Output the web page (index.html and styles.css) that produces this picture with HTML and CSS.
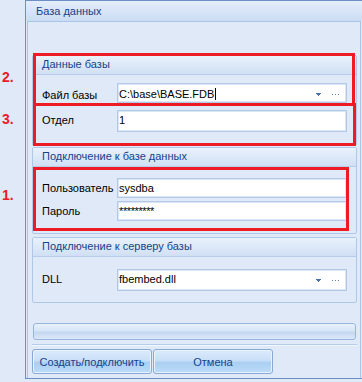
FILE: index.html
```html
<!DOCTYPE html>
<html>
<head>
<meta charset="utf-8">
<link rel="stylesheet" href="styles.css">
</head>
<body>
<div class="app">
  <div class="gutter"></div>
  <div class="window">
    <div class="title">База данных</div>
    <div class="panel">
      <section class="group g1">
        <div class="ghead">Данные базы</div>
        <div class="gbody b1">
          <div class="row">
            <span class="lbl low">Файл базы</span>
            <div class="inp"><span class="val low">C:\base\BASE.FDB<i class="caret"></i></span><svg class="arrow" width="5" height="3" viewBox="0 0 5 3"><rect x="0" y="0" width="5" height="1" fill="#4670ad"/><rect x="1" y="1" width="3" height="1" fill="#4670ad"/><rect x="2" y="2" width="1" height="1" fill="#4670ad"/></svg><svg class="dots" width="7" height="1" viewBox="0 0 7 1"><rect x="0" y="0" width="1" height="1" fill="#5a7fb8"/><rect x="3" y="0" width="1" height="1" fill="#5a7fb8"/><rect x="6" y="0" width="1" height="1" fill="#5a7fb8"/></svg></div>
          </div>
          <div class="row r2">
            <span class="lbl">Отдел</span>
            <div class="inp tall"><span class="val">1</span></div>
          </div>
        </div>
      </section>
      <section class="group g2">
        <div class="ghead">Подключение к базе данных</div>
        <div class="gbody b2">
          <div class="row">
            <span class="lbl">Пользователь</span>
            <div class="inp"><span class="val">sysdba</span></div>
          </div>
          <div class="row r3">
            <span class="lbl">Пароль</span>
            <div class="inp"><span class="val pw">*********</span></div>
          </div>
        </div>
      </section>
      <section class="group g3">
        <div class="ghead">Подключение к серверу базы</div>
        <div class="gbody b3">
          <div class="row">
            <span class="lbl">DLL</span>
            <div class="inp tall"><span class="val">fbembed.dll</span><svg class="arrow" width="5" height="3" viewBox="0 0 5 3"><rect x="0" y="0" width="5" height="1" fill="#4670ad"/><rect x="1" y="1" width="3" height="1" fill="#4670ad"/><rect x="2" y="2" width="1" height="1" fill="#4670ad"/></svg><svg class="dots" width="7" height="1" viewBox="0 0 7 1"><rect x="0" y="0" width="1" height="1" fill="#5a7fb8"/><rect x="3" y="0" width="1" height="1" fill="#5a7fb8"/><rect x="6" y="0" width="1" height="1" fill="#5a7fb8"/></svg></div>
          </div>
        </div>
      </section>
      <div class="progress"></div>
      <div class="sep"></div>
      <div class="buttons">
        <button class="btn">Создать/подключить</button>
        <button class="btn">Отмена</button>
      </div>
    </div>
  </div>
  <span class="num n2">2.</span>
  <span class="num n3">3.</span>
  <span class="num n1">1.</span>
  <div class="mark m2"></div>
  <div class="mark m3"></div>
  <div class="mark m1"></div>
</div>
</body>
</html>
```
FILE: styles.css
```css
* { box-sizing: border-box; }
html, body { margin: 0; padding: 0; }
body {
  background: #dfe9f7;
  font-family: "Liberation Sans", Arial, sans-serif;
  font-size: 11px;
  color: #000;
  width: 362px;
  height: 382px;
  overflow: hidden;
}
.app { position: relative; display: flex; width: 362px; height: 382px; }
.gutter { width: 25px; flex: none; }
.window {
  width: 337px;
  height: 379px;
  border: 1px solid #6e8fc3;
  border-right: none;
  display: flex;
  flex-direction: column;
}
.title {
  height: 20px;
  flex: none;
  background: linear-gradient(#e4eefb, #d6e4f7 55%, #cbdcf3);
  color: #15428b;
  font-size: 11px;
  line-height: 20px;
  padding-left: 10px;
}
.panel {
  width: 334px;
  margin-left: 1px;
  flex: 1;
  border: 1px solid #a9c4e8;
  border-bottom: none;
  padding: 33px 3px 0 4px;
  display: flex;
  flex-direction: column;
}
.group {
  border: 1px solid #b0c8e8;
  border-radius: 2px;
  width: 325px;
  flex: none;
}
.ghead {
  height: 19px;
  background: linear-gradient(#e9f1fc, #dde9f8 50%, #cfdff4);
  border-bottom: 1px solid #b8cde9;
  color: #15428b;
  line-height: 17px;
  padding-left: 9px;
}
.gbody { padding: 0 9px; display: flex; flex-direction: column; }
.g1 { height: 91px; }
.g2 { height: 87px; margin-top: 1px; }
.g3 { height: 66px; margin-top: 3px; }
.b1 { padding-top: 8px; }
.b2 { padding-top: 11px; }
.b3 { padding-top: 12px; }
.row { display: flex; align-items: flex-start; height: 20px; }
.r2 { margin-top: 7px; height: 22px; }
.r3 { margin-top: 3px; }
.lbl { width: 75px; flex: none; line-height: 20px; white-space: nowrap; }
.lbl.low { padding-top: 2px; }
.inp {
  width: 230px;
  height: 20px;
  border: 1px solid #b3c8e6;
  background: #fff;
  box-shadow: inset 0 0 0 1px #dce7f5;
  display: flex;
  align-items: flex-start;
  padding: 0 1px;
  line-height: 18px;
}
.inp.tall { height: 22px; }
.val { flex: 1; white-space: nowrap; }
.val.low { padding-top: 1px; }
.pw { letter-spacing: -0.4px; }
.caret { display: inline-block; width: 1px; height: 12px; background: #000; margin-left: 1px; vertical-align: -2px; }
.arrow { flex: none; margin-top: 9px; margin-right: 11px; display: block; }
.dots { flex: none; margin-top: 10px; margin-right: 6px; display: block; }
.progress {
  margin-top: 20px;
  margin-left: 1px;
  width: 323px;
  height: 17px;
  flex: none;
  border: 1px solid #97b6de;
  border-radius: 3px;
  background: linear-gradient(#e9f1fc, #d6e5f7 45%, #c3d7f1 55%, #dce8f8);
}
.sep {
  margin-top: 4px;
  width: 325px;
  height: 1px;
  flex: none;
  background: #b5cdec;
  box-shadow: 0 1px 0 #f2f7fe;
}
.buttons { display: flex; gap: 1px; margin-top: 4px; }
.btn {
  width: 120px;
  height: 25px;
  border: 1px solid #86a9d6;
  border-radius: 3px;
  background: linear-gradient(#dcebfc, #c9dff8 45%, #a9cff3 55%, #bcdcf8);
  box-shadow: inset 0 0 0 1px #eaf3fd;
  color: #15428b;
  font-family: "Liberation Sans", Arial, sans-serif;
  font-size: 11px;
  padding: 0;
}
.num {
  position: absolute;
  left: 2px;
  color: #ec1c24;
  font-weight: bold;
  font-size: 14px;
  line-height: 14px;
}
.n2 { top: 70px; }
.n3 { top: 112px; }
.n1 { top: 188px; }
.mark { position: absolute; border: 3px solid #ed1c24; }
.m2 { left: 33px; top: 53px; width: 322px; height: 53px; }
.m3 { left: 33px; top: 103px; width: 323px; height: 43px; }
.m1 { left: 33px; top: 167px; width: 316px; height: 64px; }
```
